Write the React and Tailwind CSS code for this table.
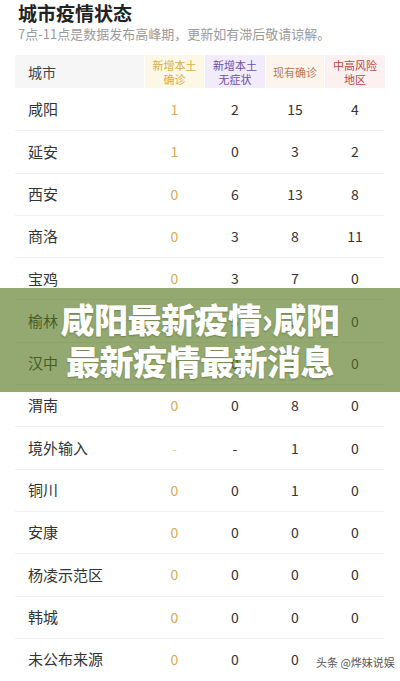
const rows = [
  ['咸阳', '1', '2', '15', '4'],
  ['延安', '1', '0', '3', '2'],
  ['西安', '0', '6', '13', '8'],
  ['商洛', '0', '3', '8', '11'],
  ['宝鸡', '0', '3', '7', '0'],
  ['榆林', '0', '5', '3', '0'],
  ['汉中', '0', '0', '6', '0'],
  ['渭南', '0', '0', '8', '0'],
  ['境外输入', '-', '-', '1', '0'],
  ['铜川', '0', '0', '1', '0'],
  ['安康', '0', '0', '0', '0'],
  ['杨凌示范区', '0', '0', '0', '0'],
  ['韩城', '0', '0', '0', '0'],
  ['未公布来源', '0', '0', '0', ''],
];

const cols = 'grid grid-cols-[129px_59px_60px_58px_60px] gap-x-[1px]';

export default function App() {
  return (
    <div
      className="relative h-[681px] w-[400px] overflow-hidden bg-white"
      style={{ fontFamily: '"Noto Sans CJK SC", Roboto, "Liberation Sans", sans-serif' }}
    >
      <div className="px-[18px] pt-[2px]">
        <h1 className="text-[19px] font-bold leading-[21px] text-[#222]">城市疫情状态</h1>
        <p className="text-[13px] leading-[22px] text-[#9a9a9a]">
          7点-11点是数据发布高峰期，更新如有滞后敬请谅解。
        </p>
      </div>

      <div className="mt-[10px] pl-[15px]">
        <div className={`${cols} h-[33px] text-[11px] leading-[14px]`}>
          <div className="flex items-center bg-[#f6f6f6] pl-[13px] text-[14px] text-[#444]">城市</div>
          <div className="flex items-center justify-center bg-[#fdf7e6] text-center text-[#d9ad4c]">
            新增本土<br />确诊
          </div>
          <div className="flex items-center justify-center bg-[#f1ebfc] text-center text-[#6f4fa0]">
            新增本土<br />无症状
          </div>
          <div className="flex items-center justify-center bg-[#fdf4ee] text-center text-[#b57a52]">
            现有确诊
          </div>
          <div className="flex items-center justify-center bg-[#fdf0f0] text-center text-[#b9463f]">
            中高风险<br />地区
          </div>
        </div>

        {rows.map((r, i) => (
          <div
            key={r[0]}
            className={`${cols} h-[42.3px] w-[369px] items-center text-[14px] text-[#333] ${i > 0 ? 'border-t border-[#efefef]' : ''}`}
          >
            <div className="pl-[13px] text-[15px] text-[#333]">{r[0]}</div>
            <div className={`text-center ${r[1] === '-' ? 'text-[#e3cf9f]' : 'text-[#d6ac4e]'}`}>{r[1]}</div>
            <div className="text-center">{r[2]}</div>
            <div className="text-center">{r[3]}</div>
            <div className="text-center">{r[4]}</div>
          </div>
        ))}
      </div>

      <div className="absolute left-0 top-[288px] flex h-[104px] w-full flex-col items-center justify-center bg-[rgba(84,118,30,0.63)]">
        <div className="text-[34px] font-black leading-[42px] tracking-[-0.5px] text-white [text-shadow:0_1px_2px_rgba(40,60,10,0.35)]">
          咸阳最新疫情›咸阳
        </div>
        <div className="text-[34px] font-black leading-[42px] tracking-[-0.5px] text-white [text-shadow:0_1px_2px_rgba(40,60,10,0.35)]">
          最新疫情最新消息
        </div>
      </div>

      <div className="absolute left-[316px] top-[654px] text-[11px] leading-[16px] text-[#555] [text-shadow:0_0_2px_#fff,0_0_2px_#fff]">
        头条 @烨妹说娱
      </div>
    </div>
  );
}
